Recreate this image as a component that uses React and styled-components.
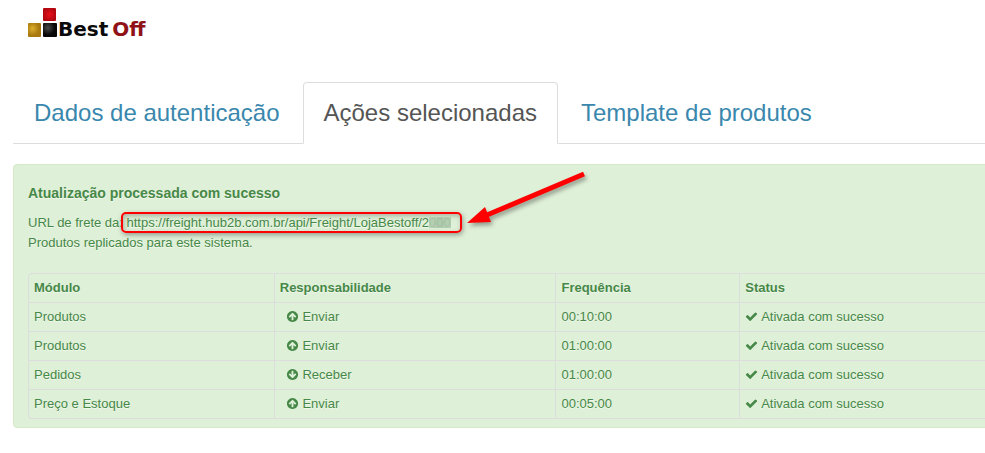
import styled, {createGlobalStyle} from 'styled-components'

const tabs = [
	{id: 'dados', label: 'Dados de autenticação'},
	{id: 'acoes', label: 'Ações selecionadas', active: true},
	{id: 'template', label: 'Template de produtos'},
]

const modules = [
	{name: 'Produtos', action: 'Enviar', frequency: '00:10:00'},
	{name: 'Produtos', action: 'Enviar', frequency: '01:00:00'},
	{name: 'Pedidos', action: 'Receber', frequency: '01:00:00'},
	{name: 'Preço e Estoque', action: 'Enviar', frequency: '00:05:00'},
]

function ArrowCircle({down}) {
	return(
		<Icon viewBox="0 0 1792 1792" aria-hidden="true">
			<path
				transform={down ? 'rotate(180 896 896)' : undefined}
				d="M1412 895q0-27-18-45l-362-362-91-91q-18-18-45-18t-45 18l-91 91-362 362q-18 18-18 45t18 45l91 91q18 18 45 18t45-18l189-189v502q0 26 19 45t45 19h128q26 0 45-19t19-45v-502l189 189q19 19 45 19t45-19l91-91q18-18 18-45zm252 1q0 209-103 385.5t-279.5 279.5-385.5 103-385.5-103-279.5-279.5-103-385.5 103-385.5 279.5-279.5 385.5-103 385.5 103 279.5 279.5 103 385.5z"
			/>
		</Icon>
	)
}

function Check() {
	return(
		<Icon viewBox="0 0 1792 1792" aria-hidden="true">
			<path d="M1671 566q0 40-28 68l-724 724-136 136q-28 28-68 28t-68-28l-136-136-362-362q-28-28-28-68t28-68l136-136q28-28 68-28t68 28l294 295 656-657q28-28 68-28t68 28l136 136q28 28 28 68z"/>
		</Icon>
	)
}

function Logo() {
	return(
		<Brand href="#home">
			<svg width="30" height="30" viewBox="0 0 30 30" aria-hidden="true">
				<defs>
					<radialGradient id="red"><stop offset="0" stopColor="#e8101a"/><stop offset="1" stopColor="#b30810"/></radialGradient>
					<radialGradient id="gold" cx="0.35" cy="0.4"><stop offset="0" stopColor="#dcae2c"/><stop offset="1" stopColor="#a8790f"/></radialGradient>
					<radialGradient id="black" cx="0.35" cy="0.35"><stop offset="0" stopColor="#4a4a4a"/><stop offset="1" stopColor="#080808"/></radialGradient>
				</defs>
				<rect x="15" y="0" width="13" height="13" rx="1" fill="url(#red)"/>
				<rect x="0" y="15" width="13" height="14" rx="1" fill="url(#gold)"/>
				<rect x="15" y="15" width="14" height="14" rx="1" fill="url(#black)"/>
			</svg>
			<BrandName>Best</BrandName>
			<BrandName $accent>Off</BrandName>
		</Brand>
	)
}

function App() {
	return(
		<Page>
			<GlobalStyle/>
			<Header><Logo/></Header>
			<Content>
				<Tabs>
					{tabs.map(tab =>
						<Tab key={tab.id} href={`#${tab.id}`} $active={tab.active}>{tab.label}</Tab>
					)}
				</Tabs>
				<Alert>
					<h4>Atualização processada com sucesso</h4>
					<p>
						URL de frete da:{' '}
						<FreightUrl href="#frete">
							https://freight.hub2b.com.br/api/Freight/LojaBestoff/2<Masked>000</Masked>
							<Pointer width="130" height="70" viewBox="0 0 130 70" aria-hidden="true">
								<path d="M121 8L24 49" stroke="#f00" strokeWidth="5"/>
								<path d="M4 57L22 41L28 56Z" fill="#f00"/>
							</Pointer>
						</FreightUrl>
					</p>
					<p>Produtos replicados para este sistema.</p>
					<Table>
						<thead>
							<tr>
								<th>Módulo</th>
								<th>Responsabilidade</th>
								<th>Frequência</th>
								<th>Status</th>
							</tr>
						</thead>
						<tbody>
							{modules.map((item, idx) =>
								<tr key={idx}>
									<td>{item.name}</td>
									<ActionCell><ArrowCircle down={item.action === 'Receber'}/> {item.action}</ActionCell>
									<td>{item.frequency}</td>
									<td><Check/> Ativada com sucesso</td>
								</tr>
							)}
						</tbody>
					</Table>
				</Alert>
			</Content>
		</Page>
	)
}

const GlobalStyle = createGlobalStyle`
	body {
		margin: 0;
		background: #fff;
		color: #333;
		font: 13px/20px "Liberation Sans", Arial, sans-serif;
	}
`

const Page = styled.div`
	overflow: hidden;
	padding-bottom: 20px;
`

const Header = styled.header`
	padding: 8px 28px 44px;
`

const Brand = styled.a`
	display: flex;
	align-items: flex-end;
	text-decoration: none;
`

const BrandName = styled.span`
	font: bold 20px/18px "DejaVu Sans", sans-serif;
	color: ${props => props.$accent ? '#8f1218' : '#0a0a0a'};
	margin-left: ${props => props.$accent ? '4px' : '0'};
`

/* the panel is wider than the window and runs off its right side */
const Content = styled.main`
	margin: 0 -58px 0 13px;
`

const Tabs = styled.nav`
	display: flex;
	gap: 2px;
	margin-bottom: 20px;
	border-bottom: 1px solid #ddd;
`

const Tab = styled.a`
	margin-bottom: -1px;
	padding: 20px;
	border: 1px solid ${props => props.$active ? '#ddd' : 'transparent'};
	border-bottom-color: ${props => props.$active ? '#fff' : 'transparent'};
	border-radius: 4px 4px 0 0;
	color: ${props => props.$active ? '#555' : '#3a87ad'};
	font-size: 24px;
	line-height: 20px;
	text-decoration: none;
	white-space: nowrap;
`

const Alert = styled.section`
	padding: 18px 14px 8px;
	border: 1px solid #d6e9c6;
	border-radius: 4px;
	background-color: #dff0d8;
	color: #468847;
	text-shadow: 0 1px 0 rgba(255, 255, 255, 0.5);

	& > h4 {
		margin: 0 0 10px;
		font-size: 14px;
		line-height: 20px;
	}

	& > p {
		margin: 0;
	}
`

const FreightUrl = styled.a`
	position: relative;
	color: inherit;
	text-decoration: none;
	white-space: nowrap;

	&::before {
		content: '';
		position: absolute;
		inset: -3px -11px -3px -6px;
		border: 2px solid #f00;
		border-radius: 5px;
		box-shadow: 1px 2px 5px rgba(0, 0, 0, 0.35), inset 1px 2px 5px rgba(0, 0, 0, 0.25);
	}
`

const Masked = styled.span`
	position: relative;

	&::after {
		content: '';
		position: absolute;
		inset: 2px 0 2px 0;
		background: linear-gradient(90deg, #b3cdb0e0, #a9c4a8e0 50%, #b0cbaee0);
	}
`

const Pointer = styled.svg`
	position: absolute;
	left: calc(100% + 12px);
	bottom: -6px;
	filter: drop-shadow(2px 3px 2px rgba(0, 0, 0, 0.35));
`

const Icon = styled.svg`
	width: 13px;
	height: 13px;
	fill: currentColor;
	vertical-align: -2px;
`

const Table = styled.table`
	width: 100%;
	margin-top: 20px;
	border: 1px solid #ddd;
	border-left: 0;
	border-radius: 4px;
	border-spacing: 0;
	table-layout: fixed;

	& th, & td {
		box-sizing: border-box;
		padding: 4px 5px;
		border-left: 1px solid #ddd;
		text-align: left;
	}

	& td {
		border-top: 1px solid #ddd;
	}

	& th:nth-child(1) {
		width: 24.6%;
		border-top-left-radius: 4px;
	}

	& th:nth-child(2) {
		width: 28.2%;
	}

	& th:nth-child(3) {
		width: 18.4%;
	}

	& tr:last-child td:first-child {
		border-bottom-left-radius: 4px;
	}
`

const ActionCell = styled.td`
	&& {
		padding-left: 11px;
	}
`

export default App
